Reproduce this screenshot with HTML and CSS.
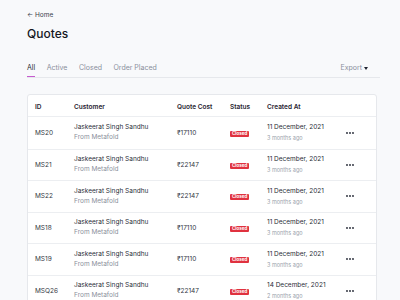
FILE: index.html
```html
<!DOCTYPE html>
<html lang="en">
<head>
  <meta charset="UTF-8">
  <title>Quotes</title>
  <link rel="stylesheet" href="styles.css">
</head>
<body>
  <div class="page">
    <div class="back">&larr; Home</div>
    <h1 class="title">Quotes</h1>

    <div class="tabs">
      <div class="tab-list">
        <span class="tab active">All</span>
        <span class="tab">Active</span>
        <span class="tab">Closed</span>
        <span class="tab">Order Placed</span>
      </div>
      <span class="export">Export <span class="caret"></span></span>
    </div>

    <div class="card">
      <div class="row head">
        <span>ID</span>
        <span>Customer</span>
        <span>Quote Cost</span>
        <span>Status</span>
        <span>Created At</span>
        <span></span>
      </div>

      <div class="row">
        <span class="id">MS20</span>
        <span class="cust"><b>Jaskeerat Singh Sandhu</b><small>From Metafold</small></span>
        <span class="cost">₹17110</span>
        <span><i class="badge">Closed</i></span>
        <span class="date"><b>11 December, 2021</b><small>3 months ago</small></span>
        <span class="more"><svg width="8" height="2" viewBox="0 0 8 2"><circle cx="1" cy="1" r="0.9"/><circle cx="4" cy="1" r="0.9"/><circle cx="7" cy="1" r="0.9"/></svg></span>
      </div>
      <div class="row">
        <span class="id">MS21</span>
        <span class="cust"><b>Jaskeerat Singh Sandhu</b><small>From Metafold</small></span>
        <span class="cost">₹22147</span>
        <span><i class="badge">Closed</i></span>
        <span class="date"><b>11 December, 2021</b><small>3 months ago</small></span>
        <span class="more"><svg width="8" height="2" viewBox="0 0 8 2"><circle cx="1" cy="1" r="0.9"/><circle cx="4" cy="1" r="0.9"/><circle cx="7" cy="1" r="0.9"/></svg></span>
      </div>
      <div class="row">
        <span class="id">MS22</span>
        <span class="cust"><b>Jaskeerat Singh Sandhu</b><small>From Metafold</small></span>
        <span class="cost">₹22147</span>
        <span><i class="badge">Closed</i></span>
        <span class="date"><b>11 December, 2021</b><small>3 months ago</small></span>
        <span class="more"><svg width="8" height="2" viewBox="0 0 8 2"><circle cx="1" cy="1" r="0.9"/><circle cx="4" cy="1" r="0.9"/><circle cx="7" cy="1" r="0.9"/></svg></span>
      </div>
      <div class="row">
        <span class="id">MS18</span>
        <span class="cust"><b>Jaskeerat Singh Sandhu</b><small>From Metafold</small></span>
        <span class="cost">₹17110</span>
        <span><i class="badge">Closed</i></span>
        <span class="date"><b>11 December, 2021</b><small>3 months ago</small></span>
        <span class="more"><svg width="8" height="2" viewBox="0 0 8 2"><circle cx="1" cy="1" r="0.9"/><circle cx="4" cy="1" r="0.9"/><circle cx="7" cy="1" r="0.9"/></svg></span>
      </div>
      <div class="row">
        <span class="id">MS19</span>
        <span class="cust"><b>Jaskeerat Singh Sandhu</b><small>From Metafold</small></span>
        <span class="cost">₹17110</span>
        <span><i class="badge">Closed</i></span>
        <span class="date"><b>11 December, 2021</b><small>3 months ago</small></span>
        <span class="more"><svg width="8" height="2" viewBox="0 0 8 2"><circle cx="1" cy="1" r="0.9"/><circle cx="4" cy="1" r="0.9"/><circle cx="7" cy="1" r="0.9"/></svg></span>
      </div>
      <div class="row">
        <span class="id">MSQ26</span>
        <span class="cust"><b>Jaskeerat Singh Sandhu</b><small>From Metafold</small></span>
        <span class="cost">₹22147</span>
        <span><i class="badge">Closed</i></span>
        <span class="date"><b>14 December, 2021</b><small>2 months ago</small></span>
        <span class="more"><svg width="8" height="2" viewBox="0 0 8 2"><circle cx="1" cy="1" r="0.9"/><circle cx="4" cy="1" r="0.9"/><circle cx="7" cy="1" r="0.9"/></svg></span>
      </div>
    </div>
  </div>
</body>
</html>
```

FILE: styles.css
```css
body {
  margin: 0;
  background: #f8f9fb;
  font-family: Inter, "Noto Sans", sans-serif;
  color: #1f2330;
  overflow: hidden;
}
.page {
  padding: 10px 20px 0 27px;
}
.back {
  font-size: 6.5px;
  line-height: 10px;
  color: #3a3f4b;
}
.title {
  margin: 6px 0 0;
  font-size: 12px;
  line-height: 16px;
  font-weight: 500;
  color: #14171f;
}
.tabs {
  margin-top: 21px;
  display: flex;
  justify-content: space-between;
  align-items: flex-start;
  border-bottom: 1px solid #e6e8ec;
}
.tab-list {
  display: flex;
  gap: 11.5px;
}
.tab {
  font-size: 7px;
  line-height: 10px;
  padding-bottom: 4px;
  color: #8a8f9c;
}
.tab.active {
  color: #2a2e38;
  box-shadow: inset 0 -1px 0 #c65bcf;
}
.export {
  font-size: 7px;
  line-height: 10px;
  color: #8a8f9c;
  margin-right: 12px;
  display: flex;
  align-items: center;
  gap: 2px;
}
.caret {
  width: 0;
  height: 0;
  border-left: 2.5px solid transparent;
  border-right: 2.5px solid transparent;
  border-top: 3px solid #1f2330;
}
.card {
  margin-top: 16px;
  width: 348px;
  background: #fff;
  border: 1px solid #e6e8ec;
  border-radius: 3px;
}
.row {
  box-sizing: border-box;
  display: grid;
  grid-template-columns: 39px 103px 53px 37px 1fr 30px;
  align-items: center;
  padding-left: 7px;
  height: 31.5px;
  border-top: 1px solid #eceef1;
  font-size: 6.5px;
  color: #333844;
}
.row.head {
  border-top: none;
  height: 22px;
  padding-top: 2px;
  border-bottom: 1px solid #eceef1;
  font-weight: 600;
  color: #1f2330;
}
.row.head + .row {
  border-top: none;
}
.cust b, .date b {
  display: block;
  font-weight: 400;
  line-height: 9px;
  color: #2a2e38;
}
.cust small {
  display: block;
  font-size: 6.5px;
  line-height: 9px;
  margin-top: 1px;
  color: #8a8f9c;
}
.date small {
  display: block;
  font-size: 5.5px;
  line-height: 8px;
  margin-top: 2px;
  color: #9a9fab;
}
.badge {
  display: inline-block;
  font-style: normal;
  font-size: 4.5px;
  font-weight: 700;
  line-height: 6px;
  padding: 0 2px;
  background: #e0323f;
  color: #fff;
  border-radius: 1px;
}
.more {
  display: flex;
  align-items: center;
}
.more svg {
  fill: #1f2330;
}
```
